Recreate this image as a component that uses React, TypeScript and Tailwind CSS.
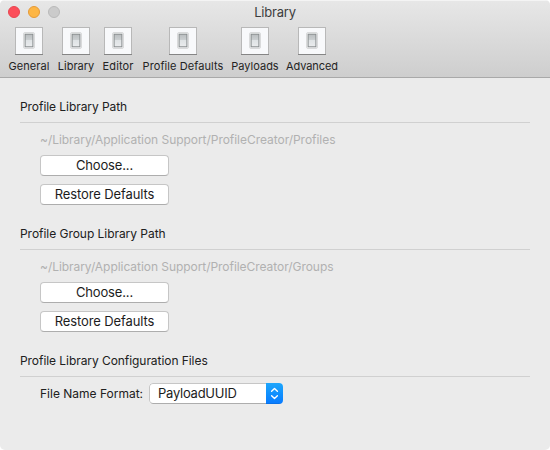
const toolbarItems = [
  { label: 'General', box: 'w-[42px]', text: 'tracking-[0.05px]' },
  { label: 'Library', box: 'w-[38px] ml-[7px]', text: 'tracking-[0px]' },
  { label: 'Editor', box: 'w-[32px] ml-[7px]', text: 'tracking-[0.1px]' },
  { label: 'Profile Defaults', box: 'w-[82px] ml-[8px]', text: 'tracking-[0.08px]' },
  { label: 'Payloads', box: 'w-[48px] ml-[7px]', text: 'tracking-[0px]' },
  { label: 'Advanced', box: 'w-[52px] ml-[7px]', text: 'tracking-[-0.1px]' },
];

function SwitchIcon() {
  return (
    <svg width="28" height="28" viewBox="0 0 28 28" className="block shrink-0">
      <defs>
        <linearGradient id="rocker" x1="0" y1="0" x2="0" y2="1">
          <stop offset="0" stopColor="#b9bdbf" />
          <stop offset="0.45" stopColor="#cbcfd1" />
          <stop offset="0.5" stopColor="#dfe3e5" />
          <stop offset="1" stopColor="#eaecee" />
        </linearGradient>
      </defs>
      <rect width="28" height="28" fill="#b8b8b8" />
      <rect x="1" y="1" width="26" height="26" fill="#f8f9fb" />
      <rect y="27" width="28" height="1" fill="#858585" />
      <rect x="8.5" y="5.5" width="11" height="16" rx="1.5" fill="#f5f6f7" stroke="#d9dadb" />
      <rect x="10.1" y="7.2" width="7.8" height="12.6" fill="url(#rocker)" stroke="#868b8c" />
    </svg>
  );
}

function PushButton({ label, text }: { label: string; text: string }) {
  return (
    <button className="flex h-[21px] w-[129px] items-center justify-center rounded-[4px] border border-[#c6c6c6] border-b-[#adadad] bg-white text-[13px] leading-none text-[#1c1c1c]">
      <span className={`whitespace-nowrap ${text}`}>{label}</span>
    </button>
  );
}

function Heading({ label, text }: { label: string; text: string }) {
  return (
    <h2 className="h-[24px] border-b border-[#d0d0d0] text-[12px] leading-[16px] font-normal whitespace-nowrap">
      <span className={text}>{label}</span>
    </h2>
  );
}

function PathSection({ title, titleText, path, pathText }: { title: string; titleText: string; path: string; pathText: string }) {
  return (
    <section className="h-[127px]">
      <Heading label={title} text={titleText} />
      <div className="flex flex-col pl-5">
        <p className="mt-[9px] h-[16px] text-[12px] leading-[16px] whitespace-nowrap text-[#b1b1b1]">
          <span className={pathText}>{path}</span>
        </p>
        <div className="mt-[7px] flex flex-col gap-2">
          <PushButton label="Choose..." text="tracking-[-0.15px]" />
          <PushButton label="Restore Defaults" text="tracking-[-0.1px]" />
        </div>
      </div>
    </section>
  );
}

export default function App() {
  return (
    <div className="h-[450px] w-[550px] bg-white font-['Inter','Liberation_Sans',sans-serif] text-[#202020]">
      <div className="h-full overflow-hidden rounded-[5px] bg-[#ebebeb]">
        <header className="h-[78px] border-t border-b border-t-[#f4f4f4] border-b-[#a9a9a9] bg-linear-to-b from-[#e7e7e7] to-[#cecece]">
          <div className="flex h-[21px] items-center pl-2">
            <div className="flex w-[52px] gap-2">
              <span className="size-3 rounded-full border border-[#e84650] bg-[#fc4e5a]" />
              <span className="size-3 rounded-full border border-[#e69a37] bg-[#fdb645]" />
              <span className="size-3 rounded-full border border-[#bababa] bg-[#cbcbcb]" />
            </div>
            <h1 className="ml-[-60px] flex-1 text-center text-[13px] leading-[20px] font-normal tracking-[-0.2px] text-[#3d3d3d]">Library</h1>
          </div>
          <nav className="mt-[5px] flex pl-2">
            {toolbarItems.map((item) => (
              <div key={item.label} className={`flex shrink-0 flex-col items-center ${item.box}`}>
                <SwitchIcon />
                <span className={`mt-[4px] text-[11px] leading-[14px] whitespace-nowrap text-[#242424] ${item.text}`}>{item.label}</span>
              </div>
            ))}
          </nav>
        </header>
        <main className="px-5 pt-[21px]">
          <PathSection title="Profile Library Path" titleText="tracking-[-0.06px]" path="~/Library/Application Support/ProfileCreator/Profiles" pathText="tracking-[-0.04px]" />
          <PathSection title="Profile Group Library Path" titleText="tracking-[-0.04px]" path="~/Library/Application Support/ProfileCreator/Groups" pathText="tracking-[-0.05px]" />
          <section>
            <Heading label="Profile Library Configuration Files" text="tracking-[-0.06px]" />
            <div className="mt-[6px] flex items-center pl-5">
              <span className="w-[109px] text-[12px] whitespace-nowrap">File Name Format:</span>
              <div className="flex h-[21px] w-[134px] overflow-hidden rounded-[4px] bg-white">
                <div className="flex flex-1 items-center rounded-l-[4px] border border-r-0 border-[#c6c6c6] border-b-[#adadad] pl-2 text-[13px] tracking-[-0.25px] text-[#1c1c1c]">PayloadUUID</div>
                <div className="flex w-[17px] items-center justify-center border-b border-[#0872e8] bg-linear-to-b from-[#1fa6fb] to-[#0a7cff]">
                  <svg width="9" height="13" viewBox="0 0 9 13" fill="none" stroke="white" strokeWidth="1.4" strokeLinecap="round" strokeLinejoin="round">
                    <path d="M1.6 4.2 4.5 1.5 7.4 4.2M1.6 8.8 4.5 11.5 7.4 8.8" />
                  </svg>
                </div>
              </div>
            </div>
          </section>
        </main>
      </div>
    </div>
  );
}
